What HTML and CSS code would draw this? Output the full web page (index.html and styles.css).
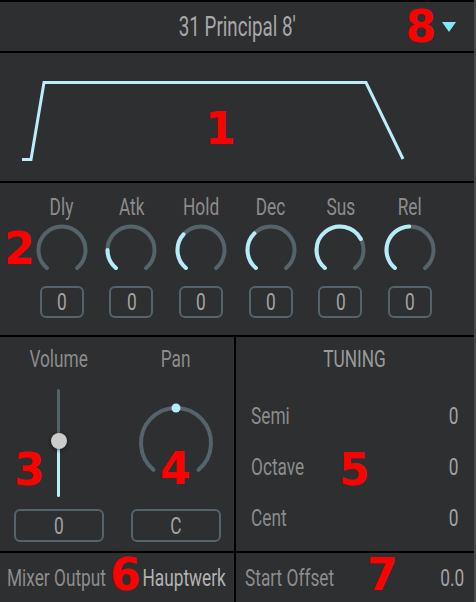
FILE: index.html
```html
<!DOCTYPE html>
<html>
<head>
    <meta charset="UTF-8">
    <meta name="viewport" content="width=device-width, initial-scale=1.0">
    <link rel="stylesheet" href="styles.css">
</head>
<body>
    <div class="editor">
        <header class="title-bar">
            <div></div>
            <div class="title">31 Principal 8'</div>
            <div class="title-right">
                <span class="marker marker-inline">8</span>
                <span class="dropdown-arrow"></span>
            </div>
        </header>

        <section class="envelope">
            <svg class="envelope-graph" viewBox="0 0 474 128" width="474" height="128">
                <polyline points="22,106.5 31,106.5 44,29.5 366,29.5 403,106" />
            </svg>
            <span class="marker m1">1</span>
        </section>

        <section class="knobs">
            <span class="marker m2">2</span>
            <div class="knob-col">
                <div class="label">Dly</div>
                <svg class="knob" viewBox="0 0 56 56"><path class="track" d="M12.9 46 A23.5 23.5 0 1 1 43.1 46"/></svg>
                <div class="value-box"><span class="cond">0</span></div>
            </div>
            <div class="knob-col">
                <div class="label">Atk</div>
                <svg class="knob" viewBox="0 0 56 56"><path class="track" d="M12.9 46 A23.5 23.5 0 1 1 43.1 46"/><path class="fill" d="M12.9 46 A23.5 23.5 0 0 1 4.5 28"/></svg>
                <div class="value-box"><span class="cond">0</span></div>
            </div>
            <div class="knob-col">
                <div class="label">Hold</div>
                <svg class="knob" viewBox="0 0 56 56"><path class="track" d="M12.9 46 A23.5 23.5 0 1 1 43.1 46"/><path class="fill" d="M12.9 46 A23.5 23.5 0 0 1 10.5 12.3"/></svg>
                <div class="value-box"><span class="cond">0</span></div>
            </div>
            <div class="knob-col">
                <div class="label">Dec</div>
                <svg class="knob" viewBox="0 0 56 56"><path class="track" d="M12.9 46 A23.5 23.5 0 1 1 43.1 46"/><path class="fill" d="M12.9 46 A23.5 23.5 0 0 1 11.4 11.4"/></svg>
                <div class="value-box"><span class="cond">0</span></div>
            </div>
            <div class="knob-col">
                <div class="label">Sus</div>
                <svg class="knob" viewBox="0 0 56 56"><path class="track" d="M12.9 46 A23.5 23.5 0 1 1 43.1 46"/><path class="fill" d="M12.9 46 A23.5 23.5 0 1 1 48.8 17"/></svg>
                <div class="value-box"><span class="cond">0</span></div>
            </div>
            <div class="knob-col">
                <div class="label">Rel</div>
                <svg class="knob" viewBox="0 0 56 56"><path class="track" d="M12.9 46 A23.5 23.5 0 1 1 43.1 46"/><path class="fill" d="M12.9 46 A23.5 23.5 0 0 1 27.2 4.5"/></svg>
                <div class="value-box"><span class="cond">0</span></div>
            </div>
        </section>

        <div class="split">
            <section class="mix">
                <div class="mix-col">
                    <div class="label">Volume</div>
                    <div class="control">
                        <div class="slider">
                            <div class="slider-thumb"></div>
                        </div>
                    </div>
                    <div class="value-box wide"><span class="cond">0</span></div>
                </div>
                <div class="mix-col">
                    <div class="label">Pan</div>
                    <div class="control">
                        <svg class="pan-knob" viewBox="0 0 80 80">
                            <path class="track" d="M17.5 66.8 A35 35 0 1 1 62.5 66.8"/>
                            <circle class="dot" cx="40" cy="5" r="4.5"/>
                        </svg>
                    </div>
                    <div class="value-box wide"><span class="cond">C</span></div>
                </div>
                <span class="marker m3">3</span>
                <span class="marker m4">4</span>
            </section>

            <section class="tuning">
                <div class="label">TUNING</div>
                <div class="tuning-rows">
                    <div class="row"><span class="cond">Semi</span><span class="cond num">0</span></div>
                    <div class="row"><span class="cond">Octave</span><span class="cond num">0</span></div>
                    <div class="row"><span class="cond">Cent</span><span class="cond num">0</span></div>
                </div>
                <span class="marker m5">5</span>
            </section>
        </div>

        <div class="split">
            <section class="footer-cell row">
                <span class="cond">Mixer Output</span>
                <span class="cond strong">Hauptwerk</span>
                <span class="marker m6">6</span>
            </section>
            <section class="footer-cell row">
                <span class="cond">Start Offset</span>
                <span class="cond num">0.0</span>
                <span class="marker m7">7</span>
            </section>
        </div>
    </div>
</body>
</html>
```

FILE: styles.css
```css
* {
    margin: 0;
    padding: 0;
    box-sizing: border-box;
}

body {
    background: #2e2f31;
    font-family: Roboto, 'Liberation Sans', sans-serif;
    font-size: 24px;
    line-height: 24px;
    color: #8c8c8c;
}

/* the panel font is a tall condensed face, squeeze Roboto to match */
.cond,
.label,
.title {
    display: inline-block;
    white-space: nowrap;
    transform: scaleX(0.72);
}

.editor {
    width: 476px;
    height: 602px;
    background: #000;
    padding-top: 2px;
    border-right: 2px solid #46494c;
    display: grid;
    grid-template-rows: 49px 128px 152px 214px 49px;
    row-gap: 2px;
}

.editor > section,
.split > section {
    background: #2e2f31;
    position: relative;
}

/* header */
.title-bar {
    background: #2e2f31;
    display: grid;
    grid-template-columns: 1fr auto 1fr;
    align-items: center;
}

.title {
    font-size: 28px;
    line-height: 28px;
    color: #a8a8a8;
    padding-top: 1px;
    transform: scaleX(0.67);
}

.title-right {
    display: flex;
    justify-content: flex-end;
    align-items: center;
    gap: 6px;
    padding-right: 18px;
}

.dropdown-arrow {
    width: 0;
    height: 0;
    border-left: 7.5px solid transparent;
    border-right: 7.5px solid transparent;
    border-top: 10px solid #7fe7f6;
    margin-top: 1px;
}

/* red annotation numbers */
.marker {
    font-family: 'DejaVu Sans', sans-serif;
    font-weight: bold;
    font-size: 44px;
    line-height: 1;
    color: #ff0000;
    position: absolute;
}

.marker.marker-inline {
    position: static;
}

.m1 { left: 205px; top: 54px; }
.m2 { left: 4px; top: 44px; }
.m3 { left: 14px; top: 111px; }
.m4 { left: 160px; top: 110px; }
.m5 { left: 103px; top: 111px; }
.m6 { left: 110px; top: 0; }
.m7 { left: 131px; top: 0; }

/* envelope */
.envelope-graph {
    display: block;
}

.envelope-graph polyline {
    fill: none;
    stroke: #bdedf9;
    stroke-width: 3;
    stroke-linejoin: miter;
}

/* knobs */
.knobs {
    display: grid;
    grid-template-columns: repeat(6, 69.67px);
    padding: 12px 0 0 27px;
}

.knob-col {
    display: flex;
    flex-direction: column;
    align-items: center;
}

.knob {
    width: 56px;
    height: 56px;
    margin-top: 3px;
}

.track,
.fill {
    fill: none;
    stroke-width: 4;
    stroke-linecap: round;
}

.track {
    stroke: #55646a;
}

.fill {
    stroke: #b6ebf8;
}

.value-box {
    width: 44px;
    height: 32px;
    margin-top: 8px;
    border: 2px solid #55646a;
    border-radius: 6px;
    color: #a3a3a3;
    display: flex;
    align-items: center;
    justify-content: center;
}

.value-box.wide {
    width: 90px;
    height: 33px;
    margin-top: 0;
}

/* volume + pan */
.split {
    display: grid;
    grid-template-columns: 234px 1fr;
    column-gap: 2px;
}

.mix {
    display: grid;
    grid-template-columns: 117px 117px;
    padding-top: 10px;
}

.mix-col {
    display: flex;
    flex-direction: column;
    align-items: center;
}

.control {
    height: 138px;
    padding-top: 5px;
    display: flex;
    align-items: center;
    justify-content: center;
}

.slider {
    width: 3px;
    height: 108px;
    border-radius: 2px;
    background: linear-gradient(to bottom, #55646a 0, #55646a 52px, #bdedf9 52px);
    position: relative;
}

.slider-thumb {
    position: absolute;
    left: -6.5px;
    top: 44px;
    width: 16px;
    height: 16px;
    border-radius: 50%;
    background: #cbcbcb;
    box-shadow: 0 1px 4px rgba(0, 0, 0, 0.6);
}

.pan-knob {
    width: 80px;
    height: 80px;
}

.pan-knob .dot {
    fill: #b6ebf8;
}

/* tuning */
.tuning {
    padding: 10px 16px 0 15px;
    display: flex;
    flex-direction: column;
}

.tuning > .label {
    display: block;
    text-align: center;
    color: #9a9a9a;
}

.tuning-rows {
    margin-top: 33px;
    display: flex;
    flex-direction: column;
    gap: 27px;
}

/* label left, value right; spans keep their unscaled width so allow overflow */
.row {
    display: grid;
    grid-template-columns: minmax(0, 1fr) auto;
    align-items: center;
}

.row > .cond:first-child {
    justify-self: start;
    transform-origin: left center;
}

.row > .cond.num,
.row > .cond.strong {
    justify-self: end;
    transform-origin: right center;
}

.num {
    color: #a3a3a3;
}

/* footer */
.footer-cell {
    padding: 0 8px 0 7px;
}

.split > .footer-cell:last-child {
    padding: 0 10px 0 9px;
}

.footer-cell .strong {
    color: #b3b3b3;
}
```
